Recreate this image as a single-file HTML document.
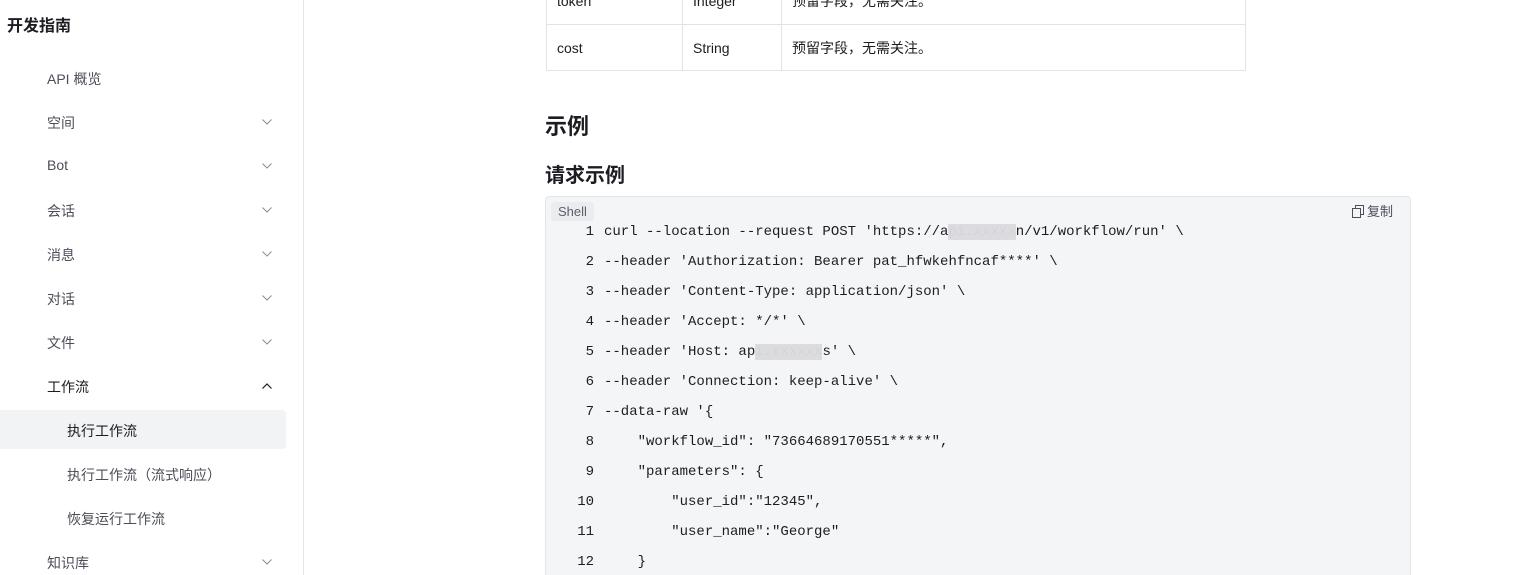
<!DOCTYPE html>
<html style="overflow:hidden;height:575px"><head><meta charset="utf-8"><style>
body{margin:0;width:1514px;height:575px;overflow:hidden;background:#fff;font-family:"Liberation Sans","Noto Sans CJK SC",sans-serif;position:relative}
.a{position:absolute;white-space:nowrap}
.side{position:absolute;left:0;top:0;width:303px;height:575px;border-right:1px solid #e6e7eb}
.nav{font-size:14px;color:#4c4f58}
.chev{position:absolute;left:262px;width:10px;height:6px}
td{border:1px solid #e2e3e6;font-size:14px;color:#1c1d23;padding:0 0 0 10px}
.code{position:absolute;left:545px;top:196px;width:864px;height:400px;background:#f4f5f7;border:1px solid #e5e6ea;border-radius:4px}
.ln{position:absolute;width:48px;text-align:right;font-family:"Liberation Mono",monospace;font-size:14px;color:#1c1d23}
.cd{position:absolute;left:58px;font-family:"Liberation Mono",monospace;font-size:14px;color:#1c1d23;white-space:pre}
.bl{color:#d4d4d8;background:#dcdce0}
</style></head><body>
<div class="side">
<div class="a" style="left:7px;top:12px;font-size:16px;font-weight:bold;color:#1c1d23">开发指南</div>
<div class="a nav" style="left:47px;top:69px">API 概览</div>
<div class="a nav" style="left:47px;top:113px">空间</div>
<div class="a nav" style="left:47px;top:157px">Bot</div>
<div class="a nav" style="left:47px;top:201px">会话</div>
<div class="a nav" style="left:47px;top:245px">消息</div>
<div class="a nav" style="left:47px;top:289px">对话</div>
<div class="a nav" style="left:47px;top:333px">文件</div>
<div class="a nav" style="left:47px;top:377px;color:#1c1d23">工作流</div>
<div style="position:absolute;left:0;top:410px;width:286px;height:39px;background:#f2f3f5;border-radius:0 4px 4px 0"></div>
<div class="a nav" style="left:67px;top:421px;color:#1c1d23">执行工作流</div>
<div class="a nav" style="left:67px;top:465px">执行工作流（流式响应）</div>
<div class="a nav" style="left:67px;top:509px">恢复运行工作流</div>
<div class="a nav" style="left:47px;top:553px">知识库</div>
<svg class="chev" style="top:119px" viewBox="0 0 10 6"><path d="M0.5 0.5L5 5L9.5 0.5" fill="none" stroke="#8a8d96" stroke-width="1"/></svg>
<svg class="chev" style="top:163px" viewBox="0 0 10 6"><path d="M0.5 0.5L5 5L9.5 0.5" fill="none" stroke="#8a8d96" stroke-width="1"/></svg>
<svg class="chev" style="top:207px" viewBox="0 0 10 6"><path d="M0.5 0.5L5 5L9.5 0.5" fill="none" stroke="#8a8d96" stroke-width="1"/></svg>
<svg class="chev" style="top:251px" viewBox="0 0 10 6"><path d="M0.5 0.5L5 5L9.5 0.5" fill="none" stroke="#8a8d96" stroke-width="1"/></svg>
<svg class="chev" style="top:295px" viewBox="0 0 10 6"><path d="M0.5 0.5L5 5L9.5 0.5" fill="none" stroke="#8a8d96" stroke-width="1"/></svg>
<svg class="chev" style="top:339px" viewBox="0 0 10 6"><path d="M0.5 0.5L5 5L9.5 0.5" fill="none" stroke="#8a8d96" stroke-width="1"/></svg>
<svg class="chev" style="top:383px" viewBox="0 0 10 6"><path d="M0.5 5.5L5 1L9.5 5.5" fill="none" stroke="#1c1d23" stroke-width="1.2"/></svg>
<svg class="chev" style="top:559px" viewBox="0 0 10 6"><path d="M0.5 0.5L5 5L9.5 0.5" fill="none" stroke="#8a8d96" stroke-width="1"/></svg>
</div>
<table style="position:absolute;left:546px;top:-23px;width:700px;border-collapse:collapse">
<tr style="height:47px"><td style="width:125px">token</td><td style="width:88px">Integer</td><td>预留字段，无需关注。</td></tr>
<tr style="height:46px"><td>cost</td><td>String</td><td>预留字段，无需关注。</td></tr>
</table>
<div class="a" style="left:545px;top:109px;font-size:22px;font-weight:bold;color:#1c1d23">示例</div>
<div class="a" style="left:545px;top:159px;font-size:20px;font-weight:bold;color:#1c1d23">请求示例</div>
<div class="code">
<div class="a" style="left:5px;top:5px;padding:2px 7px;background:#ebecef;border-radius:3px;font-size:13px;color:#5c5f68">Shell</div>
<div class="a" style="left:806px;top:4px;font-size:13px;color:#4c4f58"><svg width="12" height="13" viewBox="0 0 12 13" style="vertical-align:-2px;margin-right:3px"><rect x="0.5" y="3.5" width="8" height="9" fill="none" stroke="#4c4f58"/><path d="M3.5 3.5V0.5H11.5V9.5H8.5" fill="none" stroke="#4c4f58"/></svg>复制</div>
<div class="ln" style="top:27px">1</div><div class="cd" style="top:27px">curl --location --request POST 'https://a<span class="bl">pi.xxxxx</span>n/v1/workflow/run' \</div>
<div class="ln" style="top:57px">2</div><div class="cd" style="top:57px">--header 'Authorization: Bearer pat_hfwkehfncaf****' \</div>
<div class="ln" style="top:87px">3</div><div class="cd" style="top:87px">--header 'Content-Type: application/json' \</div>
<div class="ln" style="top:117px">4</div><div class="cd" style="top:117px">--header 'Accept: */*' \</div>
<div class="ln" style="top:147px">5</div><div class="cd" style="top:147px">--header 'Host: ap<span class="bl">i.xxxxxx</span>s' \</div>
<div class="ln" style="top:177px">6</div><div class="cd" style="top:177px">--header 'Connection: keep-alive' \</div>
<div class="ln" style="top:207px">7</div><div class="cd" style="top:207px">--data-raw '{</div>
<div class="ln" style="top:237px">8</div><div class="cd" style="top:237px">    "workflow_id": "73664689170551*****",</div>
<div class="ln" style="top:267px">9</div><div class="cd" style="top:267px">    "parameters": {</div>
<div class="ln" style="top:297px">10</div><div class="cd" style="top:297px">        "user_id":"12345",</div>
<div class="ln" style="top:327px">11</div><div class="cd" style="top:327px">        "user_name":"George"</div>
<div class="ln" style="top:357px">12</div><div class="cd" style="top:357px">    }</div>
</div>
</body></html>
